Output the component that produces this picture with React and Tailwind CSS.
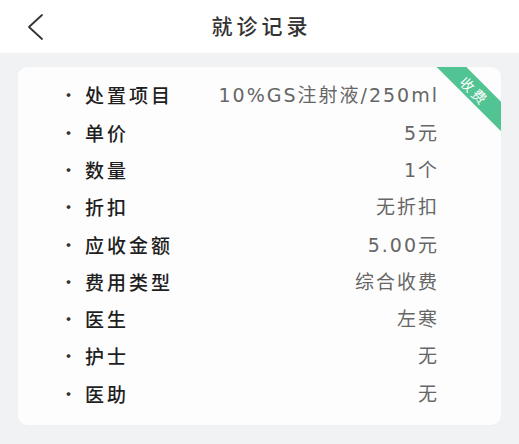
import React from "react";

const rows = [
  ["处置项目", "10%GS注射液/250ml"],
  ["单价", "5元"],
  ["数量", "1个"],
  ["折扣", "无折扣"],
  ["应收金额", "5.00元"],
  ["费用类型", "综合收费"],
  ["医生", "左寒"],
  ["护士", "无"],
  ["医助", "无"],
];

export default function App() {
  return (
    <div
      className="w-[519px] h-[444px] bg-[#f1f2f4] flex flex-col"
      style={{ fontFamily: '"Noto Sans CJK SC", "Noto Sans", sans-serif' }}
    >
      <div className="h-[53px] bg-white flex items-center relative shrink-0">
        <svg
          className="absolute left-[26px] top-[13px]"
          width="20"
          height="28"
          viewBox="0 0 20 28"
          fill="none"
          stroke="#333"
          strokeWidth="1.8"
          strokeLinecap="round"
          strokeLinejoin="round"
        >
          <path d="M16 2 L3 14 L16 26" />
        </svg>
        <div className="flex-1 text-center text-[21px] tracking-[4px] text-[#333] font-medium pl-[4px] -mt-[1px]">
          就诊记录
        </div>
      </div>
      <div className="px-[18px] pt-[14px]">
        <div className="relative overflow-hidden bg-[#fdfdfd] rounded-[9px] w-[483px] h-[358px] pt-[10px] shadow-[0_0_2px_rgba(0,0,0,0.04)]">
          <div className="absolute left-[408px] top-[12px] w-[96px] h-[21px] bg-[#52c393] rotate-45 flex items-center justify-center text-white text-[14px] leading-none tracking-[3px] pl-[3px]">
            收费
          </div>
          {rows.map(([k, v]) => (
            <div key={k} className="h-[37.3px] flex items-center pl-[45px] pr-[64px]">
              <span className="text-[#333] text-[15px] w-[24px] font-bold -ml-[2px]">·</span>
              <span className="text-[#1f1f1f] text-[19px] font-medium tracking-[3px]">{k}</span>
              <span
                className="ml-auto text-[#666] text-[19px] tracking-[2px] mr-[-2px]"
                style={{ fontFamily: '"DejaVu Sans", "Noto Sans CJK SC", sans-serif' }}
              >
                {v}
              </span>
            </div>
          ))}
        </div>
      </div>
    </div>
  );
}
